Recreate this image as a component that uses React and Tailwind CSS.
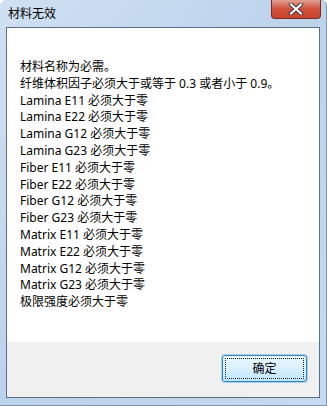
import React from "react";

const lines = [
  "材料名称为必需。",
  "纤维体积因子必须大于或等于 0.3 或者小于 0.9。",
  "Lamina E11 必须大于零",
  "Lamina E22 必须大于零",
  "Lamina G12 必须大于零",
  "Lamina G23 必须大于零",
  "Fiber E11 必须大于零",
  "Fiber E22 必须大于零",
  "Fiber G12 必须大于零",
  "Fiber G23 必须大于零",
  "Matrix E11 必须大于零",
  "Matrix E22 必须大于零",
  "Matrix G12 必须大于零",
  "Matrix G23 必须大于零",
  "极限强度必须大于零",
];

const font = { fontFamily: '"Noto Sans", "Noto Sans CJK SC", sans-serif' };

function CloseX() {
  return (
    <svg width="16" height="12" viewBox="0 0 16 12">
      <path d="M3 1.5 L13 10.5 M13 1.5 L3 10.5" stroke="#3c3c3c" strokeWidth="4.2" strokeLinecap="round" />
      <path d="M3 1.5 L13 10.5 M13 1.5 L3 10.5" stroke="#ffffff" strokeWidth="2.2" strokeLinecap="round" />
    </svg>
  );
}

export default function App() {
  return (
    <div
      className="w-[327px] h-[406px] flex flex-col px-[6px] pb-[7px] rounded-t-[6px] bg-gradient-to-br from-[#cfe0f2] via-[#bcd3ec] to-[#c6daef] border-r border-b border-[#7f93aa] overflow-hidden"
      style={font}
    >
      {/* title bar */}
      <div className="h-[27px] flex items-start justify-between shrink-0">
        <div className="pt-[7px] pl-[2px] text-[12px] leading-[14px] text-black">材料无效</div>
        <div className="mr-[-1px] w-[50px] h-[19px] rounded-b-[4px] border border-t-0 border-[#7a2a22] bg-gradient-to-b from-[#e2a094] via-[#cf4f3a] to-[#c8442e] flex items-center justify-center">
          <CloseX />
        </div>
      </div>

      {/* client */}
      <div className="flex-1 flex flex-col border border-[#5d6e82] bg-white">
        <div className="flex-1 pl-[13px] pt-[31px] text-[12px] leading-[16.8px] text-black">
          {lines.map((l, i) => (
            <div key={i} className="whitespace-nowrap">{l}</div>
          ))}
        </div>
        <div className="h-[55px] bg-[#f0f0f0] flex items-start justify-end pr-[12px] pt-[13px]">
          <div className="w-[85px] h-[27px] rounded-[3px] border border-[#3c7fb1] shadow-[0_0_0_1px_#9fd4f4] bg-gradient-to-b from-[#eaf6fd] via-[#d9f0fc] to-[#bee6fd] p-[2px]">
            <div className="w-full h-full border border-dotted border-[#222] flex items-center justify-center text-[12px] text-black">
              确定
            </div>
          </div>
        </div>
      </div>
    </div>
  );
}
